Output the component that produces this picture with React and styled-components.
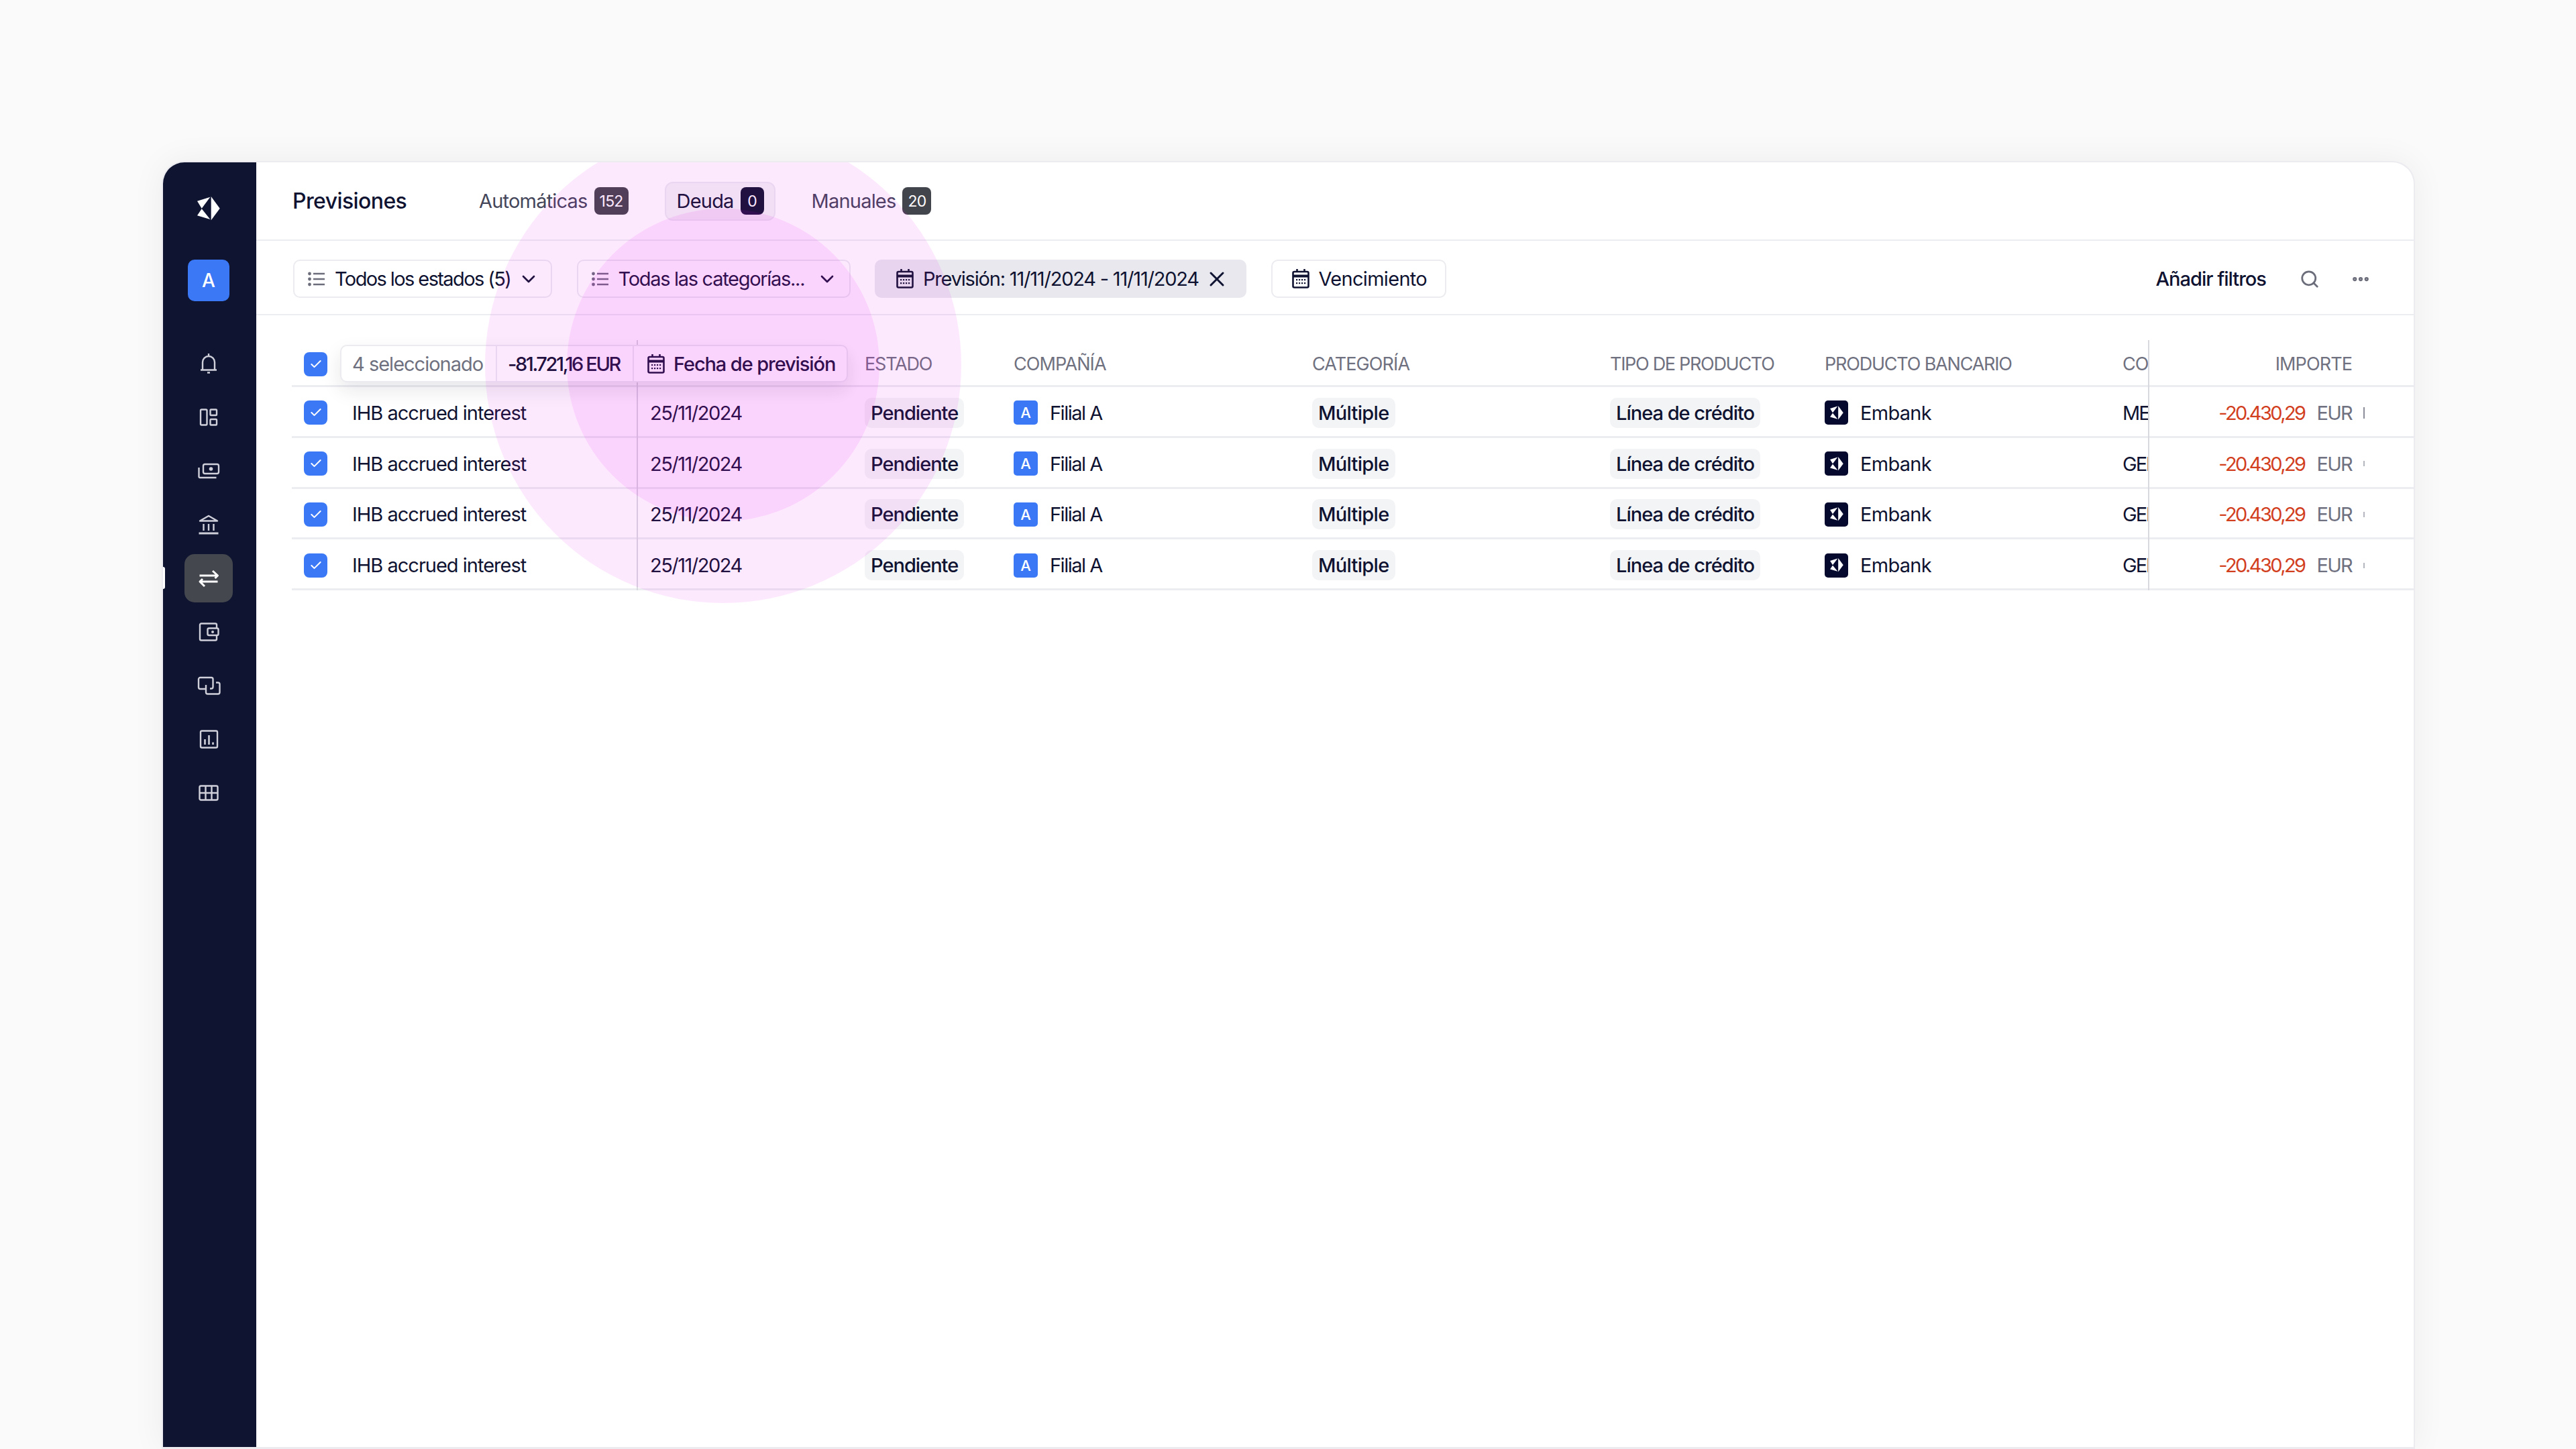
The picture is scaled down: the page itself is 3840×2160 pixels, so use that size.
import React from "react";
import styled, { createGlobalStyle } from "styled-components";
import { Check, ChevronDown, X, Search, Ellipsis } from "lucide-react";

const GlobalStyle = createGlobalStyle`
  html, body { margin: 0; padding: 0; background: #fafafa; }
  body { font-family: Inter, "Noto Sans", sans-serif; color: #0f1331; }
  * { box-sizing: border-box; }
  svg { flex-shrink: 0; }
`;

// ─── Layout ───────────────────────────────────────────────

const Page = styled.div`
  width: 3840px;
  height: 2160px;
  padding: 240px 240px 0 241px;
  display: flex;
  overflow: hidden;
`;

const Frame = styled.div`
  flex: 1;
  position: relative;
  display: flex;
  background: #fff;
  border: 2px solid #ebebf0;
  border-bottom-width: 3px;
  border-radius: 34px 34px 0 0;
  box-shadow: 0 0 50px rgba(30, 30, 60, 0.06);
  overflow: hidden;
`;

const Glow = styled.div`
  position: absolute;
  left: ${({ $cx, $r }) => $cx - $r}px;
  top: ${({ $cy, $r }) => $cy - $r}px;
  width: ${({ $r }) => $r * 2}px;
  height: ${({ $r }) => $r * 2}px;
  border-radius: 50%;
  background: rgba(230, 0, 240, 0.086);
  pointer-events: none;
  z-index: 5;
`;

const Sidebar = styled.aside`
  width: 139px;
  flex-shrink: 0;
  padding-right: 3px;
  background: #0f1431;
  display: flex;
  flex-direction: column;
  align-items: center;
  position: relative;
`;

const LogoBox = styled.div`
  margin-top: 51px;
  height: 36px;
  display: flex;
`;

const CompanyAvatar = styled.div`
  margin-top: 58px;
  margin-bottom: 57px;
  width: 62px;
  height: 62px;
  border-radius: 10px;
  background: #3b78f6;
  color: #fff;
  font-size: 28px;
  font-weight: 500;
  display: flex;
  align-items: center;
  justify-content: center;
`;

const NavList = styled.nav`
  display: flex;
  flex-direction: column;
  align-items: center;
  gap: 8.5px;
`;

const NavItem = styled.div`
  width: 72px;
  height: 71.5px;
  border-radius: 15px;
  display: flex;
  align-items: center;
  justify-content: center;
  background: ${({ $active }) => ($active ? "#44474e" : "transparent")};
  color: ${({ $active }) => ($active ? "#ffffff" : "#cfd0da")};
`;

const ActiveMark = styled.div`
  position: absolute;
  left: 0;
  top: 603px;
  width: 3px;
  height: 33px;
  background: #fff;
  border-radius: 0 3px 3px 0;
`;

const Main = styled.main`
  flex: 1;
  min-width: 0;
  display: flex;
  flex-direction: column;
`;

const TopBar = styled.header`
  height: 117px;
  flex-shrink: 0;
  padding-left: 54px;
  display: flex;
  align-items: center;
  border-bottom: 2px solid #ecedf1;
`;

const Title = styled.h1`
  margin: 0 98px 0 0;
  font-size: 32px;
  font-weight: 500;
  letter-spacing: -0.6px;
  width: 180px;
`;

const Tabs = styled.div`
  display: flex;
  align-items: center;
  gap: 54px;
`;

const Tab = styled.div`
  height: 58px;
  display: flex;
  align-items: center;
  gap: 10px;
  padding: 0 ${({ $active }) => ($active ? "15px 0 16px" : "0")};
  border-radius: 12px;
  font-size: 29px;
  letter-spacing: -0.8px;
  color: ${({ $active }) => ($active ? "#0f1331" : "#44465a")};
  background: ${({ $active }) => ($active ? "#f3f3f6" : "transparent")};
  border: ${({ $active }) => ($active ? "2px solid #ebebf0" : "none")};
`;

const TabBadge = styled.span`
  min-width: 35px;
  height: 41px;
  padding: 0 8px;
  border-radius: 8px;
  display: flex;
  align-items: center;
  justify-content: center;
  font-size: 23px;
  letter-spacing: -0.8px;
  color: #fff;
  background: ${({ $dark }) => ($dark ? "#0f1331" : "#43454c")};
`;

const FilterBar = styled.div`
  height: 111px;
  flex-shrink: 0;
  padding: 4px 64px 0 55px;
  display: flex;
  align-items: center;
  gap: 36.5px;
  border-bottom: 2px solid #ecedf1;
`;

const FilterButton = styled.button`
  height: 57px;
  width: ${({ $w }) => $w}px;
  padding: 0 ${({ $pad }) => $pad || 20}px;
  display: flex;
  align-items: center;
  gap: 14px;
  border-radius: 10px;
  font: inherit;
  font-size: 29px;
  color: #0f1331;
  white-space: nowrap;
  border: 2px solid ${({ $filled }) => ($filled ? "#e8e8ee" : "#ebebf0")};
  background: ${({ $filled }) => ($filled ? "#e8e8ee" : "#fff")};
`;

const FilterLabel = styled.span`
  flex: 1;
  text-align: left;
  letter-spacing: ${({ $ls }) => $ls || -1.3}px;
`;

const OpenIcon = styled(ChevronDown)`
  margin: 0 -3px 0 -8px;
`;

const ClearIcon = styled(X)`
  margin: 0 -6px;
`;

const FilterActions = styled.div`
  margin-left: auto;
  display: flex;
  align-items: center;
  color: #6b6d7b;
`;

const AddFilters = styled.span`
  font-size: 29px;
  font-weight: 500;
  letter-spacing: -1px;
  color: #0f1331;
  margin-right: 50px;
`;

const ActionIcon = styled.span`
  display: flex;
  margin-right: ${({ $gap }) => $gap || 0}px;
`;

// ─── Table ────────────────────────────────────────────────

const TableWrap = styled.section`
  position: relative;
  margin: 37px 0 0 53px;
`;

const columns = "514px 340px 222px 445px 444px 320px 444px 39px 1fr";

const HeadRow = styled.div`
  display: grid;
  grid-template-columns: ${columns};
  height: 70px;
  align-items: center;
  border-bottom: 3px solid #ecedf1;
  font-size: 27px;
  letter-spacing: -0.9px;
  color: #6f7180;
  padding-top: 4px;
`;

const Row = styled.div`
  display: grid;
  grid-template-columns: ${columns};
  height: 75.75px;
  align-items: center;
  border-bottom: 3px solid #ecedf1;
  font-size: 29px;
  letter-spacing: -1px;
  color: #0f1331;
  padding-top: 4px;
`;

const NameCell = styled.div`
  padding-left: 18px;
  display: flex;
  align-items: center;
  gap: 37px;
`;

const Cell = styled.div`
  white-space: nowrap;
  overflow: hidden;
  padding-left: ${({ $pad }) => $pad || 0}px;
  letter-spacing: ${({ $ls }) => ($ls ? `${$ls}px` : "inherit")};
  display: flex;
  align-items: center;
`;

const Divider = styled.div`
  position: absolute;
  top: 0;
  bottom: 0;
  left: ${({ $left }) => $left}px;
  width: 2px;
  background: #d8d9df;
`;

const Checkbox = styled.span`
  width: 35px;
  height: 36px;
  border-radius: 8px;
  background: #3b78f6;
  color: #fff;
  display: flex;
  align-items: center;
  justify-content: center;
`;

const Chip = styled.span`
  height: 45px;
  padding: 0 9px;
  border-radius: 10px;
  background: #f3f4f6;
  font-weight: 500;
  display: inline-flex;
  align-items: center;
`;

const MiniAvatar = styled.span`
  width: 36px;
  height: 36px;
  margin-right: 18px;
  border-radius: 5px;
  background: #3b78f6;
  color: #fff;
  font-size: 22px;
  font-weight: 500;
  letter-spacing: 0;
  display: flex;
  align-items: center;
  justify-content: center;
`;

const BankLogo = styled.span`
  width: 35px;
  height: 36px;
  margin-right: 18px;
  border-radius: 5px;
  background: #05092e;
  display: flex;
  align-items: center;
  justify-content: center;
`;

const AmountCell = styled.div`
  display: flex;
  align-items: center;
  justify-content: flex-end;
  padding-right: 92px;
  position: relative;
`;

const Amount = styled.span`
  color: #d23f1f;
  margin-right: 18px;
  letter-spacing: -2.6px;
`;

const Currency = styled.span`
  color: #6f7180;
  letter-spacing: -1.7px;
`;

const TailMark = styled.span`
  position: absolute;
  right: 73px;
  width: 2px;
  height: ${({ $tall }) => ($tall ? 17 : 8)}px;
  background: ${({ $tall }) => ($tall ? "#8b8d99" : "#b4b6bf")};
`;

const ImporteHead = styled.div`
  text-align: right;
  padding-right: 92px;
`;

const SelectionBar = styled.div`
  position: absolute;
  left: 72px;
  top: 7px;
  width: 757px;
  height: 56px;
  display: flex;
  align-items: stretch;
  background: #fff;
  border: 2px solid #ebebf0;
  border-radius: 10px;
  box-shadow: 0 12px 28px rgba(30, 30, 60, 0.1);
  font-size: 29px;
  letter-spacing: -1.1px;
  white-space: nowrap;
  z-index: 2;
`;

const SelectionPart = styled.div`
  display: flex;
  align-items: center;
  gap: 13px;
  width: ${({ $w }) => $w}px;
  padding-left: ${({ $pad }) => $pad}px;
  border-left: ${({ $first }) => ($first ? "none" : "2px solid #ebebf0")};
  color: ${({ $muted }) => ($muted ? "#6f7180" : "#0f1331")};
  font-weight: ${({ $muted }) => ($muted ? 400 : 500)};
  letter-spacing: ${({ $ls }) => ($ls ? `${$ls}px` : "inherit")};
`;

// ─── Icons ────────────────────────────────────────────────

const Mark = ({ w = 34, h = 36 }) => (
  <svg width={w} height={h} viewBox="0 0 34 36" fill="#fff">
    <polygon points="20.7,0 33.7,17.7 20.7,35.3" />
    <polygon points="0,6.7 19.3,0.7 6.7,17.7" />
    <polygon points="6.7,18.3 19.3,34 0,28.3" />
  </svg>
);

const NavIcon = ({ children, width = 2.4 }) => (
  <svg width="36" height="36" viewBox="0 0 36 36" fill="none" stroke="currentColor" strokeWidth={width} strokeLinejoin="round">
    {children}
  </svg>
);

const navIcons = [
  <NavIcon key="bell">
    <path d="M18 3v3M9 27V16a9 9 0 0 1 18 0v11M6 27.5h24M16 31.5h4" />
  </NavIcon>,
  <NavIcon key="layout">
    <rect x="6" y="6.5" width="9.5" height="23" rx="1.5" />
    <rect x="20.5" y="6.5" width="9.5" height="8.5" rx="1" />
    <rect x="20.5" y="21" width="9.5" height="8.5" rx="1" />
  </NavIcon>,
  <NavIcon key="money">
    <rect x="10" y="8" width="23" height="14" rx="2.5" />
    <circle cx="21.5" cy="15" r="2.8" fill="currentColor" stroke="none" />
    <path d="M3.5 13v13.5a1.5 1.5 0 0 0 1.5 1.5h24.5" />
  </NavIcon>,
  <NavIcon key="bank">
    <path d="M5 12.5 18 5l13 7.5z" />
    <path d="M10.5 17v10M18 17v10M25.5 17v10" />
    <path d="M3.5 31h29" strokeWidth="3" />
  </NavIcon>,
  <NavIcon key="swap" width={3}>
    <path d="M4.5 14H31M24 7l7.5 7-4 4M31.5 23H5M12 30l-7-7 4-4" />
  </NavIcon>,
  <NavIcon key="wallet">
    <path d="M30 13V7.5a2 2 0 0 0-2-2H7a2 2 0 0 0-2 2v21a2 2 0 0 0 2 2h21a2 2 0 0 0 2-2V23" />
    <rect x="16.5" y="12.5" width="16" height="10.5" rx="2" />
    <circle cx="24" cy="18" r="2" fill="currentColor" stroke="none" />
  </NavIcon>,
  <NavIcon key="link">
    <path d="M13 23H5.5a2.5 2.5 0 0 1-2.5-2.5v-12A2.5 2.5 0 0 1 5.5 6H22a2.5 2.5 0 0 1 2.5 2.5V20a2.5 2.5 0 0 1-2.5 2.5h-2" />
    <path d="M14 17v11a2.5 2.5 0 0 0 2.5 2.5H32a2.5 2.5 0 0 0 2.5-2.5V16a2.5 2.5 0 0 0-2.5-2.5h-3" />
  </NavIcon>,
  <NavIcon key="chart">
    <rect x="6" y="5.5" width="25" height="25" rx="2" />
    <path d="M12.5 18v8M18.5 12v14M24.5 22.5V26" strokeWidth="2.6" />
  </NavIcon>,
  <NavIcon key="table">
    <rect x="4.5" y="7.5" width="27" height="21" rx="2" />
    <path d="M13.5 7.5v21M22.5 7.5v21M4.5 18h27" />
  </NavIcon>,
];

const ListIcon = () => (
  <svg width="26" height="22" viewBox="0 0 26 22" fill="none" stroke="#6b6d7b" strokeWidth="2.4">
    <path d="M8 3h17M8 11h17M8 19h17" />
    <circle cx="2.5" cy="3" r="2.4" fill="#6b6d7b" stroke="none" />
    <circle cx="2.5" cy="11" r="2.4" fill="#6b6d7b" stroke="none" />
    <circle cx="2.5" cy="19" r="2.4" fill="#6b6d7b" stroke="none" />
  </svg>
);

const CalendarIcon = () => (
  <svg width="26" height="29" viewBox="0 0 26 29" fill="none" stroke="#0f1331" strokeWidth="2.6">
    <rect x="1.5" y="4" width="23" height="23.5" rx="2" />
    <path d="M1.5 10.5h23" strokeWidth="4" />
    <path d="M7.5 0v5M18.5 0v5" />
    <g fill="#0f1331" stroke="none">
      <rect x="6" y="15" width="2.2" height="2.2" />
      <rect x="10" y="15" width="2.2" height="2.2" />
      <rect x="14" y="15" width="2.2" height="2.2" />
      <rect x="18" y="15" width="2.2" height="2.2" />
      <rect x="6" y="20" width="2.2" height="2.2" />
      <rect x="10" y="20" width="2.2" height="2.2" />
      <rect x="14" y="20" width="2.2" height="2.2" />
      <rect x="18" y="20" width="2.2" height="2.2" />
    </g>
  </svg>
);

const rows = [
  { code: "MEDIA", tall: true },
  { code: "GENERAL" },
  { code: "GENERAL" },
  { code: "GENERAL" },
];

const App = () => (
  <Page>
    <GlobalStyle />
    <Frame>
      <Glow $cx={835} $cy={302} $r={355} />
      <Glow $cx={835} $cy={302} $r={233} />

      <Sidebar>
        <LogoBox>
          <Mark />
        </LogoBox>
        <CompanyAvatar>A</CompanyAvatar>
        <NavList>
          {navIcons.map((icon, i) => (
            <NavItem key={i} $active={i === 4}>
              {icon}
            </NavItem>
          ))}
        </NavList>
        <ActiveMark />
      </Sidebar>

      <Main>
        <TopBar>
          <Title>Previsiones</Title>
          <Tabs>
            <Tab>
              Automáticas <TabBadge>152</TabBadge>
            </Tab>
            <Tab $active>
              Deuda <TabBadge $dark>0</TabBadge>
            </Tab>
            <Tab>
              Manuales <TabBadge>20</TabBadge>
            </Tab>
          </Tabs>
        </TopBar>

        <FilterBar>
          <FilterButton $w={386}>
            <ListIcon />
            <FilterLabel $ls={-1.6}>Todos los estados (5)</FilterLabel>
            <OpenIcon size={32} strokeWidth={2} />
          </FilterButton>
          <FilterButton $w={408}>
            <ListIcon />
            <FilterLabel>Todas las categorías...</FilterLabel>
            <OpenIcon size={32} strokeWidth={2} />
          </FilterButton>
          <FilterButton $w={554} $filled $pad={30}>
            <CalendarIcon />
            <FilterLabel $ls={-1.2}>Previsión: 11/11/2024 - 11/11/2024</FilterLabel>
            <ClearIcon size={36} strokeWidth={2} />
          </FilterButton>
          <FilterButton $w={261} $pad={29}>
            <CalendarIcon />
            <FilterLabel $ls={-0.7}>Vencimiento</FilterLabel>
          </FilterButton>
          <FilterActions>
            <AddFilters>Añadir filtros</AddFilters>
            <ActionIcon $gap={46}>
              <Search size={30} strokeWidth={2.2} />
            </ActionIcon>
            <ActionIcon>
              <Ellipsis size={30} strokeWidth={3} />
            </ActionIcon>
          </FilterActions>
        </FilterBar>

        <TableWrap>
          <HeadRow>
            <NameCell>
              <Checkbox>
                <Check size={20} strokeWidth={2.4} />
              </Checkbox>
            </NameCell>
            <Cell />
            <Cell $ls={-1.2}>ESTADO</Cell>
            <Cell>COMPAÑÍA</Cell>
            <Cell>CATEGORÍA</Cell>
            <Cell $ls={-1.3}>TIPO DE PRODUCTO</Cell>
            <Cell $ls={-1.2}>PRODUCTO BANCARIO</Cell>
            <Cell>CON</Cell>
            <ImporteHead>IMPORTE</ImporteHead>
          </HeadRow>

          {rows.map((r, i) => (
            <Row key={i}>
              <NameCell>
                <Checkbox>
                  <Check size={20} strokeWidth={2.4} />
                </Checkbox>
                IHB accrued interest
              </NameCell>
              <Cell $pad={20} $ls={-1.5}>
                25/11/2024
              </Cell>
              <Cell>
                <Chip>Pendiente</Chip>
              </Cell>
              <Cell $ls={-1.5}>
                <MiniAvatar>A</MiniAvatar>
                Filial A
              </Cell>
              <Cell $ls={-0.7}>
                <Chip>Múltiple</Chip>
              </Cell>
              <Cell>
                <Chip>Línea de crédito</Chip>
              </Cell>
              <Cell $ls={-0.7}>
                <BankLogo>
                  <Mark w={20} h={21} />
                </BankLogo>
                Embank
              </Cell>
              <Cell $ls={-2}>{r.code}</Cell>
              <AmountCell>
                <Amount>-20.430,29</Amount>
                <Currency>EUR</Currency>
                <TailMark $tall={r.tall} />
              </AmountCell>
            </Row>
          ))}

          <Divider $left={514} />
          <Divider $left={2767} />

          <SelectionBar>
            <SelectionPart $first $muted $w={230} $pad={16} $ls={-1}>
              4 seleccionado
            </SelectionPart>
            <SelectionPart $w={204} $pad={16} $ls={-2.4}>
              -81.721,16 EUR
            </SelectionPart>
            <SelectionPart $w={319} $pad={20}>
              <CalendarIcon />
              Fecha de previsión
            </SelectionPart>
          </SelectionBar>
        </TableWrap>
      </Main>
    </Frame>
  </Page>
);

export default App;
